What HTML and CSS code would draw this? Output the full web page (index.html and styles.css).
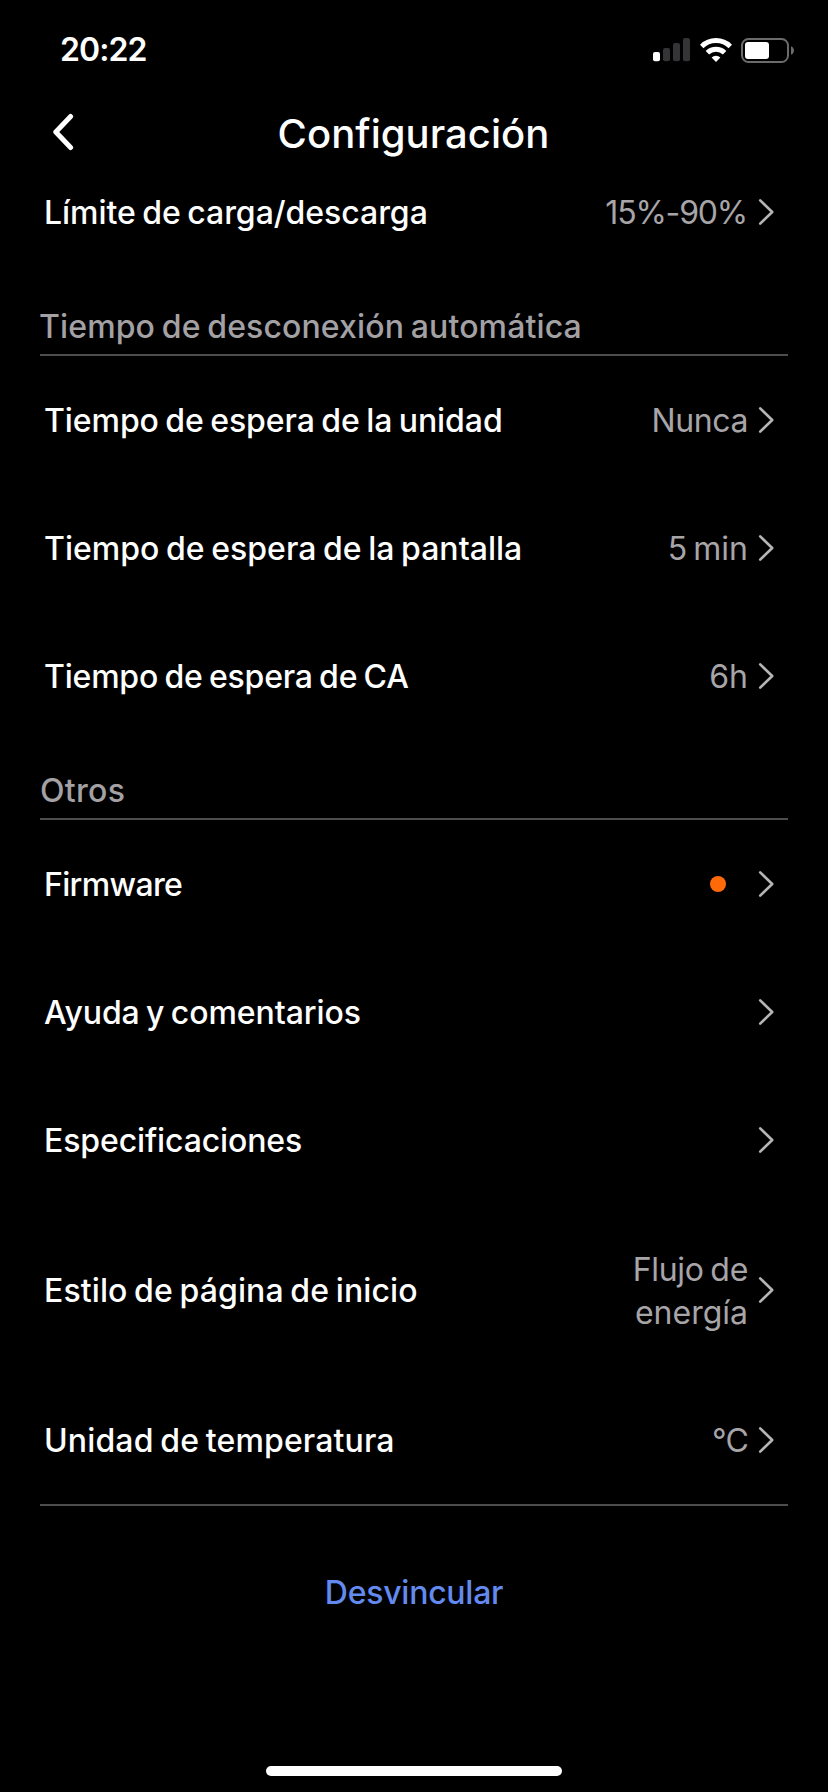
FILE: index.html
```html
<!DOCTYPE html>
<html lang="es">
<head>
<meta charset="utf-8">
<title>Configuración</title>
<link rel="stylesheet" href="styles.css">
</head>
<body>
<svg class="defs" width="0" height="0" aria-hidden="true"><symbol id="chev" viewBox="0 0 18 28"><path d="M3.2 2.4 15.2 14 3.2 25.6" fill="none" stroke="currentColor" stroke-width="2.6" stroke-linecap="round" stroke-linejoin="round"/></symbol></svg>
<div class="screen">
  <header class="status">
    <span class="time">20:22</span>
    <div class="indicators">
      <svg width="37" height="24" viewBox="0 0 37 24"><rect y="14" width="7" height="9.3" rx="2" fill="#fff"/><g fill="#343335"><rect x="10" y="10" width="7" height="13.3" rx="2"/><rect x="20" y="5" width="7" height="18.3" rx="2"/><rect x="30" y="0" width="7" height="23.3" rx="2"/></g></svg>
      <svg class="wifi" width="32" height="24" viewBox="0 0 32 24"><g fill="none" stroke="#fff" stroke-width="4.9"><path d="M1.7 8.4a20.4 20.4 0 0 1 28.6 0"/><path d="M7.4 14.8a12.3 12.3 0 0 1 17.2 0"/></g><path d="M11.6 19.6a6.4 6.4 0 0 1 8.8 0L16 24z" fill="#fff"/></svg>
      <svg class="battery" width="53" height="25" viewBox="0 0 53 25"><rect x="1" y="1" width="46" height="23" rx="6.5" fill="none" stroke="#6b6a6d" stroke-width="2"/><rect x="4" y="4" width="24" height="17" rx="3" fill="#fff"/><path d="M50 8.2c4 1.5 4 7.1 0 8.6z" fill="#6b6a6d"/></svg>
    </div>
  </header>
  <nav class="nav">
    <svg class="back" width="22" height="38" viewBox="0 0 22 38"><path d="M18.6 3.5 3.8 19l14.8 15.5" fill="none" stroke="#fff" stroke-width="5" stroke-linecap="round" stroke-linejoin="round"/></svg>
    <h1 class="title">Configuración</h1>
  </nav>
  <main class="list">
    <div class="row first"><span class="label l-limit">Límite de carga/descarga</span><span class="value v-limit">15%-90%</span><svg class="chev"><use href="#chev"/></svg></div>
    <h2 class="section s-auto"><span>Tiempo de desconexión automática</span></h2>
    <div class="row"><span class="label l-unit">Tiempo de espera de la unidad</span><span class="value v-never">Nunca</span><svg class="chev"><use href="#chev"/></svg></div>
    <div class="row"><span class="label l-screen">Tiempo de espera de la pantalla</span><span class="value v-min">5 min</span><svg class="chev"><use href="#chev"/></svg></div>
    <div class="row"><span class="label l-ac">Tiempo de espera de CA</span><span class="value v-hours">6h</span><svg class="chev"><use href="#chev"/></svg></div>
    <h2 class="section s-other"><span>Otros</span></h2>
    <div class="row"><span class="label l-firm">Firmware</span><i class="dot"></i><svg class="chev"><use href="#chev"/></svg></div>
    <div class="row"><span class="label l-help">Ayuda y comentarios</span><svg class="chev"><use href="#chev"/></svg></div>
    <div class="row"><span class="label l-spec">Especificaciones</span><svg class="chev"><use href="#chev"/></svg></div>
    <div class="row tall"><span class="label l-home">Estilo de página de inicio</span><span class="value v-flow"><span class="v-line">Flujo de</span><br>energía</span><svg class="chev"><use href="#chev"/></svg></div>
    <div class="row last"><span class="label l-temp">Unidad de temperatura</span><span class="value v-temp">°C</span><svg class="chev"><use href="#chev"/></svg></div>
  </main>
  <button class="unlink">Desvincular</button>
  <div class="home"></div>
</div>
</body>
</html>
```
FILE: styles.css
```css
* { box-sizing: border-box; }
body { margin: 0; background: #000001; }
.defs { display: block; }
.screen {
  width: 828px;
  height: 1792px;
  display: flex;
  flex-direction: column;
  background: #000001;
  color: #fff;
  font-family: Inter, "Liberation Sans", sans-serif;
  font-size: 32px;
  line-height: 43px;
  white-space: nowrap;
}
.status {
  height: 88px;
  padding: 28px 34px 0 60px;
  display: flex;
  justify-content: space-between;
  align-items: flex-start;
}
.time { font-weight: 600; letter-spacing: -0.9px; }
.indicators { display: flex; align-items: flex-start; padding-top: 9.5px; }
.wifi { margin-left: 10px; }
.battery { margin-left: 9px; }
.nav {
  height: 88px;
  display: grid;
  grid-template-columns: 150px 1fr 151px;
  align-items: center;
}
.back { margin-left: 52px; }
.title { margin: 3px 0 0; font-size: 40px; font-weight: 500; letter-spacing: 0.05px; text-align: center; }
.list { padding: 0 40px; }
.row {
  height: 128px;
  display: flex;
  align-items: center;
  padding: 0 13px 0 4px;
}
.first { height: 100px; padding-bottom: 28px; }
.tall { height: 172px; }
.last { height: 130px; border-bottom: 2px solid #4d4c4e; }
.label { font-weight: 500; margin-right: auto; word-spacing: -2px; }
.l-limit { letter-spacing: -0.04px; }
.l-unit { letter-spacing: -0.07px; }
.l-screen { letter-spacing: 0.03px; }
.l-ac { letter-spacing: -0.2px; }
.l-firm { letter-spacing: -0.65px; }
.l-help { letter-spacing: -0.09px; }
.l-spec { letter-spacing: -0.12px; }
.l-home { letter-spacing: 0.1px; }
.l-temp { letter-spacing: 0.14px; }
.value { color: #a7a5a8; text-align: right; }
.v-limit { letter-spacing: -1.2px; padding-right: 1px; }
.v-never { letter-spacing: -0.4px; }
.v-min { word-spacing: -3px; }
.v-flow { padding-top: 1px; }
.v-line { word-spacing: -2px; letter-spacing: -0.3px; }
.v-temp { letter-spacing: -0.8px; }
.chev { width: 18px; height: 28px; margin-left: 9px; color: #b5b4b6; }
.dot { width: 16px; height: 16px; border-radius: 50%; background: #ff6a09; margin-right: 22px; }
.section {
  margin: 0;
  height: 80px;
  padding-top: 29px;
  border-bottom: 2px solid #4d4c4e;
  color: #a3a1a4;
  font-size: 32px;
  font-weight: 450;
}
.s-auto { word-spacing: -2px; letter-spacing: 0.13px; text-indent: -1px; }
.s-other { letter-spacing: 0.3px; }
.unlink {
  margin: 65px auto 0;
  padding: 0;
  border: 0;
  background: none;
  color: #638bef;
  font: inherit;
  font-weight: 500;
  letter-spacing: -0.25px;
  line-height: 44px;
}
.home {
  width: 296px;
  height: 10px;
  border-radius: 5px;
  background: #fff;
  margin: auto auto 16px;
}
```
